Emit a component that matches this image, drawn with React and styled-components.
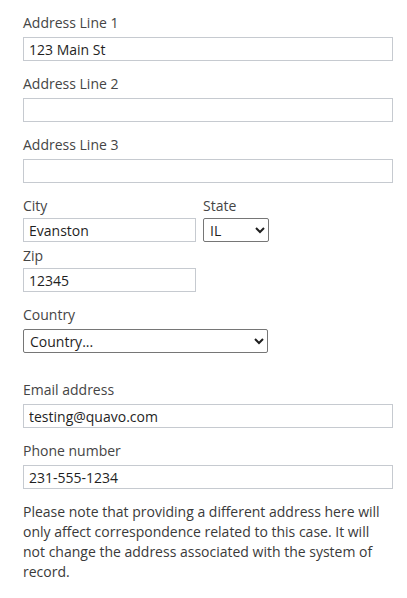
import React from 'react';
import styled, { createGlobalStyle } from 'styled-components';

const Global = createGlobalStyle`
	body {
		margin: 0;
		background: #fff;
		font-family: 'Open Sans', 'Liberation Sans', sans-serif;
		color: #444;
	}
`;

const Form = styled.div`
	width: 370px;
	padding: 13px 14px 0 23px;
`;

const Field = styled.div`
	display: flex;
	flex-direction: column;
	margin-bottom: ${({ $gap }) => $gap ?? 13}px;
`;

const Row = styled.div`
	display: flex;
	gap: 7px;
	margin-bottom: 4px;
`;

const Label = styled.label`
	font-size: 14px;
	line-height: 20px;
	color: #454545;
	margin-bottom: ${({ $space }) => $space ?? 4}px;
`;

const TextInput = styled.input`
	box-sizing: border-box;
	width: ${({ $width }) => $width || '370px'};
	height: 24px;
	margin: 0;
	padding: 0 5px;
	border: 1px solid #c6cad0;
	border-radius: 0;
	font-family: inherit;
	font-size: 14px;
	color: #1f1f1f;
	outline: none;
`;

const Select = styled.select`
	box-sizing: border-box;
	width: ${({ $width }) => $width};
	height: 24px;
	margin: 0;
	padding: 0 2px;
	border: 1px solid #767676;
	border-radius: 2px;
	background: #fff;
	font-family: inherit;
	font-size: 14px;
	color: #1f1f1f;
`;

const Note = styled.p`
	margin: 0;
	font-size: 14px;
	line-height: 20px;
	color: #3a3a3a;
`;

export default function App() {
	return (
		<>
			<Global />
			<Form>
				<Field>
					<Label>Address Line 1</Label>
					<TextInput defaultValue='123 Main St' />
				</Field>
				<Field>
					<Label>Address Line 2</Label>
					<TextInput />
				</Field>
				<Field>
					<Label>Address Line 3</Label>
					<TextInput />
				</Field>
				<Row>
					<Field $gap={0}>
						<Label $space={2}>City</Label>
						<TextInput $width='173px' defaultValue='Evanston' />
					</Field>
					<Field $gap={0}>
						<Label $space={2}>State</Label>
						<Select $width='66px' defaultValue='IL'>
							<option value='IL'>IL</option>
						</Select>
					</Field>
				</Row>
				<Field>
					<Label $space={2}>Zip</Label>
					<TextInput $width='173px' defaultValue='12345' />
				</Field>
				<Field $gap={27}>
					<Label>Country</Label>
					<Select $width='245px' defaultValue=''>
						<option value=''>Country...</option>
					</Select>
				</Field>
				<Field>
					<Label>Email address</Label>
					<TextInput defaultValue='testing@quavo.com' />
				</Field>
				<Field>
					<Label>Phone number</Label>
					<TextInput defaultValue='231-555-1234' />
				</Field>
				<Note>
					Please note that providing a different address here will only affect correspondence related to this case. It will not change the address associated with the system of record.
				</Note>
			</Form>
		</>
	);
}
